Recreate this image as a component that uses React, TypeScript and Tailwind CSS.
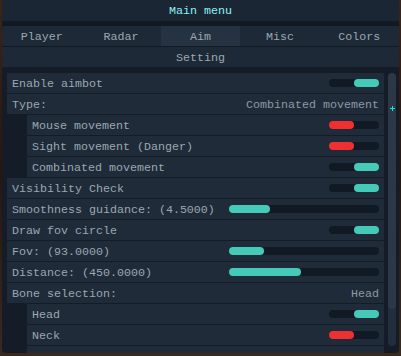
import React from 'react';

type Row =
  | { kind: 'toggle'; label: string; on: boolean; indent?: boolean }
  | { kind: 'text'; label: string; value: string; indent?: boolean }
  | { kind: 'slider'; label: string; fill: number; indent?: boolean };

const rows: Row[] = [
  { kind: 'toggle', label: 'Enable aimbot', on: true },
  { kind: 'text', label: 'Type:', value: 'Combinated movement' },
  { kind: 'toggle', label: 'Mouse movement', on: false, indent: true },
  { kind: 'toggle', label: 'Sight movement (Danger)', on: false, indent: true },
  { kind: 'toggle', label: 'Combinated movement', on: true, indent: true },
  { kind: 'toggle', label: 'Visibility Check', on: true },
  { kind: 'slider', label: 'Smoothness guidance: (4.5000)', fill: 41 },
  { kind: 'toggle', label: 'Draw fov circle', on: true },
  { kind: 'slider', label: 'Fov: (93.0000)', fill: 35 },
  { kind: 'slider', label: 'Distance: (450.0000)', fill: 72 },
  { kind: 'text', label: 'Bone selection:', value: 'Head' },
  { kind: 'toggle', label: 'Head', on: true, indent: true },
  { kind: 'toggle', label: 'Neck', on: false, indent: true },
];

const tabs = ['Player', 'Radar', 'Aim', 'Misc', 'Colors'];

function Toggle({ on }: { on: boolean }) {
  return (
    <div className="flex w-[50px] h-[8px] rounded-full bg-[#101924]">
      {on ? (
        <div className="ml-auto w-[25px] h-full rounded-full bg-[#45c9b9]" />
      ) : (
        <div className="w-[25px] h-full rounded-full bg-[#ef2f30]" />
      )}
    </div>
  );
}

function Slider({ fill }: { fill: number }) {
  return (
    <div className="w-[150px] h-[8px] rounded-full bg-[#101924]">
      <div className="h-full rounded-full bg-[#45c9b9]" style={{ width: fill }} />
    </div>
  );
}

export default function App() {
  return (
    <div
      className="relative w-[401px] h-[356px] overflow-hidden bg-gradient-to-b from-[#3a2418] via-[#26170f] to-[#3a2a1e] text-[11.67px] text-[#9ca7b3]"
      style={{ fontFamily: '"Liberation Mono", "DejaVu Sans Mono", monospace' }}
    >
      <div className="ml-[2px] w-[397px] h-[353px] flex flex-col bg-[#141d27] rounded-b-[4px] overflow-hidden">
        <div className="h-[21px] pt-[3px] flex items-center justify-center bg-[#1b2634] text-[#8ff0f4]">Main menu</div>
        <div className="h-[5px] bg-[#111923]" />
        <div className="h-[20px] flex bg-[#1d2936]">
          {tabs.map((t) => (
            <div
              key={t}
              className={
                t === 'Aim'
                  ? 'flex-1 pt-[3px] flex items-center justify-center bg-[#243241]'
                  : 'flex-1 pt-[3px] flex items-center justify-center'
              }
            >
              {t}
            </div>
          ))}
        </div>
        <div className="h-[1px] bg-[#111923]" />
        <div className="h-[20px] pt-[3px] flex items-center justify-center bg-[#1d2936]">Setting</div>
        <div className="h-[6px]" />
        <div className="flex flex-1 min-h-0">
          <div className="ml-[5px] w-[377px] flex flex-col gap-[1px]">
            {rows.map((r, i) => (
              <div
                key={i}
                className={
                  'shrink-0 h-[20px] flex items-center justify-between pr-[5px] bg-[#1f2b38] ' +
                  (r.indent ? 'ml-[20px] pl-[5px]' : 'pl-[5px]')
                }
              >
                <span className="pt-[3px] whitespace-pre">{r.label}</span>
                {r.kind === 'toggle' && <Toggle on={r.on} />}
                {r.kind === 'text' && <span className="pt-[3px] text-[#8e99a6]">{r.value}</span>}
                {r.kind === 'slider' && <Slider fill={r.fill} />}
              </div>
            ))}
            <div className="shrink-0 ml-[20px] h-[20px] bg-[#1f2b38]" />
          </div>
          <div className="ml-[4px] w-[8px] h-[273px] rounded-[4px] bg-[#222e3b] flex flex-col">
            <div className="h-[236px] rounded-[4px] bg-[#2c3846]" />
          </div>
        </div>
      </div>
      <div className="absolute left-[390px] top-[106px] w-[5px] h-[5px]">
        <div className="absolute left-[2px] top-0 w-[1px] h-[5px] bg-[#19e0f0]" />
        <div className="absolute left-0 top-[2px] w-[5px] h-[1px] bg-[#19e0f0]" />
      </div>
    </div>
  );
}
